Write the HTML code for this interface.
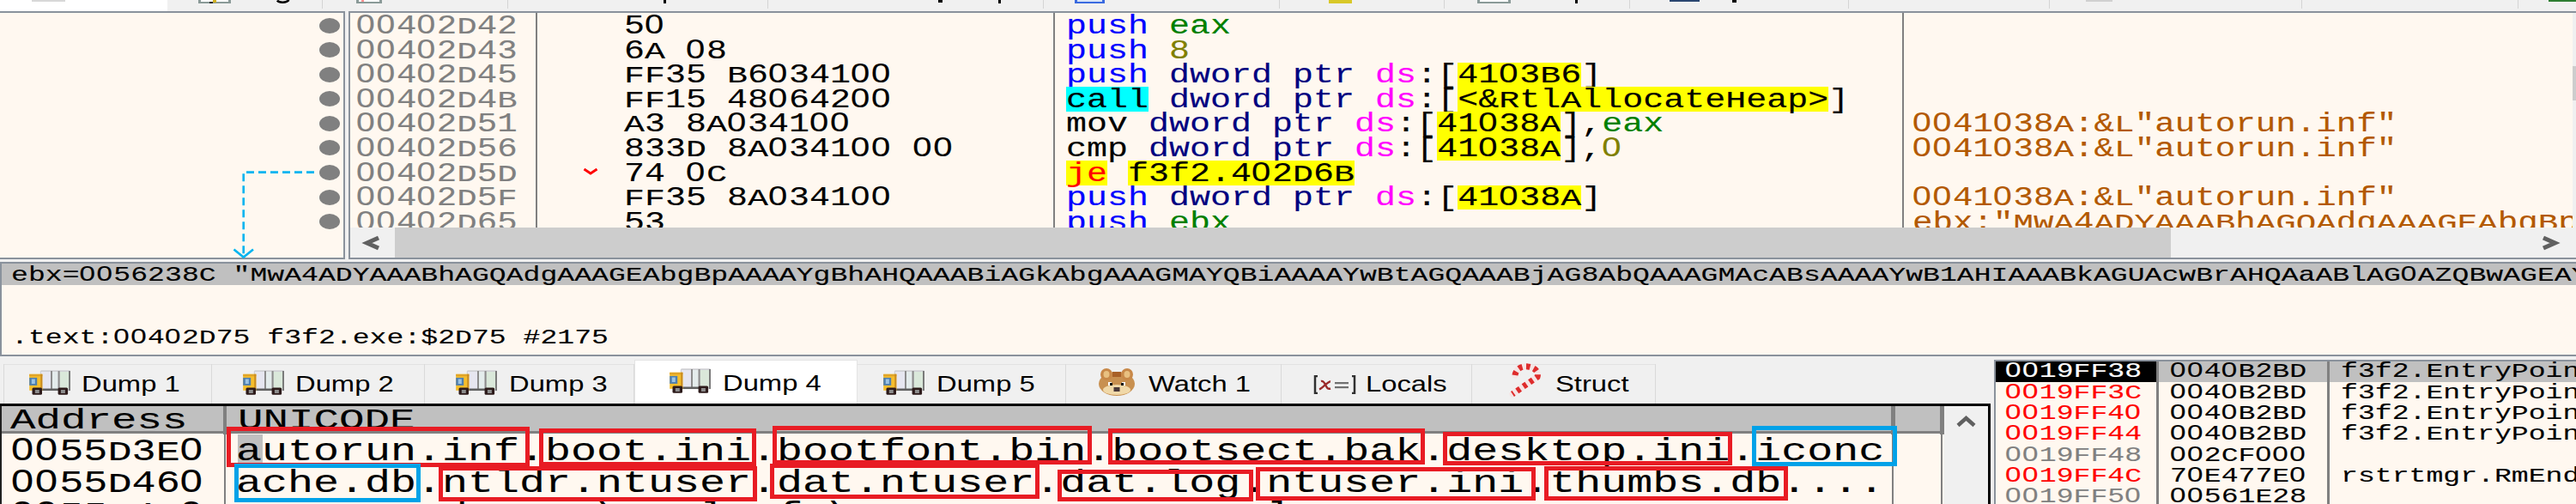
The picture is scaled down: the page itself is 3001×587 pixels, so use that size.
<!DOCTYPE html><html><head><meta charset="utf-8"><style>html,body{margin:0;padding:0;}body{width:3001px;height:587px;overflow:hidden;position:relative;background:#f0f0f0;}.t{position:absolute;white-space:pre;line-height:normal;transform-origin:0 0;-webkit-text-stroke:0.12px currentColor}.u{display:inline-block;transform:scaleY(.88);transform-origin:50% 0.8325em}.z{font-family:"Liberation Sans",sans-serif;letter-spacing:0.044em;line-height:0}</style></head><body><div style="position:absolute;left:0.0px;top:0.0px;width:3001.0px;height:13.0px;background:#f0f0f0;"></div>
<div style="position:absolute;left:0.0px;top:0.0px;width:195.0px;height:13.0px;background:#ffffff;"></div>
<div style="position:absolute;left:375.0px;top:0.0px;width:1.2px;height:10.0px;background:#d4d4d4;"></div>
<div style="position:absolute;left:591.0px;top:0.0px;width:1.2px;height:10.0px;background:#d4d4d4;"></div>
<div style="position:absolute;left:894.0px;top:0.0px;width:1.2px;height:10.0px;background:#d4d4d4;"></div>
<div style="position:absolute;left:1215.0px;top:0.0px;width:1.2px;height:10.0px;background:#d4d4d4;"></div>
<div style="position:absolute;left:1490.0px;top:0.0px;width:1.2px;height:10.0px;background:#d4d4d4;"></div>
<div style="position:absolute;left:1682.0px;top:0.0px;width:1.2px;height:10.0px;background:#d4d4d4;"></div>
<div style="position:absolute;left:1898.0px;top:0.0px;width:1.2px;height:10.0px;background:#d4d4d4;"></div>
<div style="position:absolute;left:2153.0px;top:0.0px;width:1.2px;height:10.0px;background:#d4d4d4;"></div>
<div style="position:absolute;left:2387.0px;top:0.0px;width:1.2px;height:10.0px;background:#d4d4d4;"></div>
<div style="position:absolute;left:2681.0px;top:0.0px;width:1.2px;height:10.0px;background:#d4d4d4;"></div>
<div style="position:absolute;left:2933.0px;top:0.0px;width:1.2px;height:10.0px;background:#d4d4d4;"></div>
<div style="position:absolute;left:37.0px;top:0.0px;width:39.0px;height:2.0px;background:#d8d8d8;"></div>
<div style="position:absolute;left:231.0px;top:0.0px;width:38.0px;height:4.0px;background:#8a9a98;"></div>
<div style="position:absolute;left:234.0px;top:0.0px;width:32.0px;height:1.5px;background:#ffffff;"></div>
<div style="position:absolute;left:248.0px;top:0.0px;width:4.0px;height:3.0px;background:#d0b020;"></div>
<div style="position:absolute;left:244.0px;top:2.0px;width:4.0px;height:2.0px;background:#202020;"></div>
<svg style="position:absolute;left:321px;top:0" width="18" height="5"><path d="M2 0.5 C4 3.5 13 3.5 15.5 0" fill="none" stroke="#000" stroke-width="2.6"/></svg>
<div style="position:absolute;left:415.0px;top:0.0px;width:30.0px;height:4.0px;background:#8a9a98;"></div>
<div style="position:absolute;left:418.0px;top:0.0px;width:24.0px;height:1.5px;background:#ffffff;"></div>
<div style="position:absolute;left:421.0px;top:0.0px;width:3.0px;height:2.0px;background:#ff9090;"></div>
<div style="position:absolute;left:773.0px;top:0.0px;width:3.0px;height:4.0px;background:#000;"></div>
<div style="position:absolute;left:1093.0px;top:0.0px;width:5.0px;height:3.0px;background:#000;"></div>
<div style="position:absolute;left:1163.0px;top:0.0px;width:3.0px;height:4.0px;background:#000;"></div>
<div style="position:absolute;left:1252.0px;top:0.0px;width:35.0px;height:4.0px;background:#3a6ae0;"></div>
<div style="position:absolute;left:1255.0px;top:0.0px;width:29.0px;height:2.0px;background:#d8e4f8;"></div>
<div style="position:absolute;left:1548.0px;top:0.0px;width:27.0px;height:4.0px;background:#d8c828;"></div>
<div style="position:absolute;left:1721.0px;top:0.0px;width:39.0px;height:4.0px;background:#8a9a98;"></div>
<div style="position:absolute;left:1724.0px;top:0.0px;width:33.0px;height:1.5px;background:#ffffff;"></div>
<div style="position:absolute;left:1835.0px;top:0.0px;width:3.0px;height:4.0px;background:#000;"></div>
<div style="position:absolute;left:1945.0px;top:0.0px;width:35.0px;height:2.0px;background:#2a4670;"></div>
<div style="position:absolute;left:2018.0px;top:0.0px;width:5.0px;height:3.0px;background:#000;"></div>
<div style="position:absolute;left:2430.0px;top:0.0px;width:31.0px;height:2.0px;background:#d0d0d0;"></div>
<div style="position:absolute;left:2969.0px;top:0.0px;width:32.0px;height:2.0px;background:#2e7d32;"></div>
<div style="position:absolute;left:0.0px;top:13.0px;width:402.0px;height:2.0px;background:#8a929c;"></div>
<div style="position:absolute;left:406.0px;top:13.0px;width:2595.0px;height:2.0px;background:#8a929c;"></div>
<div style="position:absolute;left:0.0px;top:15.0px;width:400.0px;height:285.0px;background:#fff8f0;"></div>
<div style="position:absolute;left:400.0px;top:13.0px;width:2.0px;height:289.0px;background:#8a929c;"></div>
<div style="position:absolute;left:0.0px;top:300.0px;width:402.0px;height:2.0px;background:#8a929c;"></div>
<div style="position:absolute;left:371.5px;top:20.6px;width:24px;height:18px;border-radius:50%;background:#808080"></div>
<div style="position:absolute;left:371.5px;top:49.2px;width:24px;height:18px;border-radius:50%;background:#808080"></div>
<div style="position:absolute;left:371.5px;top:77.7px;width:24px;height:18px;border-radius:50%;background:#808080"></div>
<div style="position:absolute;left:371.5px;top:106.3px;width:24px;height:18px;border-radius:50%;background:#808080"></div>
<div style="position:absolute;left:371.5px;top:134.9px;width:24px;height:18px;border-radius:50%;background:#808080"></div>
<div style="position:absolute;left:371.5px;top:163.4px;width:24px;height:18px;border-radius:50%;background:#808080"></div>
<div style="position:absolute;left:371.5px;top:192.0px;width:24px;height:18px;border-radius:50%;background:#808080"></div>
<div style="position:absolute;left:371.5px;top:220.6px;width:24px;height:18px;border-radius:50%;background:#808080"></div>
<div style="position:absolute;left:371.5px;top:249.1px;width:24px;height:18px;border-radius:50%;background:#808080"></div>
<svg style="position:absolute;left:0;top:0" width="402" height="302" viewBox="0 0 402 302"><path d="M366 200.6 H283.7 V299" fill="none" stroke="#00b4f0" stroke-width="2.6" stroke-dasharray="9 5"/><path d="M272.5 290.5 L283.7 299.5 L295 290.5" fill="none" stroke="#00b4f0" stroke-width="2.6"/></svg>
<div style="position:absolute;left:402.0px;top:13.0px;width:4.0px;height:289.0px;background:#f0f0f0;"></div>
<div style="position:absolute;left:406.0px;top:15.0px;width:2.0px;height:287.0px;background:#8a929c;"></div>
<div style="position:absolute;left:408.0px;top:15.0px;width:2593.0px;height:250.0px;background:#fff8f0;"></div>
<div style="position:absolute;left:406.0px;top:300.0px;width:2595.0px;height:2.0px;background:#8a929c;"></div>
<div style="position:absolute;left:624.0px;top:15.0px;width:2.4px;height:250.0px;background:#808080;"></div>
<div style="position:absolute;left:1227.0px;top:15.0px;width:2.4px;height:250.0px;background:#808080;"></div>
<div style="position:absolute;left:2216.0px;top:15.0px;width:2.4px;height:250.0px;background:#808080;"></div>
<div style="position:absolute;left:408px;top:15px;width:2589px;height:250px;overflow:hidden">
<div class="t" style="left:6.5px;top:-1.8px;font-family:'Liberation Mono',monospace;font-size:31.0px;transform:scaleX(1.2607526881720432);color:#808080;"><span class="z">0</span><span class="z">0</span>4<span class="z">0</span>2<span class="u">D</span>42</div>
<div class="t" style="left:319.0px;top:-1.8px;font-family:'Liberation Mono',monospace;font-size:31.0px;transform:scaleX(1.2903225806451615);color:#000;">5<span class="z">0</span></div>
<div class="t" style="left:834.3px;top:-1.8px;font-family:'Liberation Mono',monospace;font-size:31.0px;transform:scaleX(1.2903225806451615);color:#000;"><span style="color:#0000ff;">push</span> <span style="color:#008000;">eax</span></div>
<div class="t" style="left:6.5px;top:26.7px;font-family:'Liberation Mono',monospace;font-size:31.0px;transform:scaleX(1.2607526881720432);color:#808080;"><span class="z">0</span><span class="z">0</span>4<span class="z">0</span>2<span class="u">D</span>43</div>
<div class="t" style="left:319.0px;top:26.7px;font-family:'Liberation Mono',monospace;font-size:31.0px;transform:scaleX(1.2903225806451615);color:#000;">6<span class="u">A</span> <span class="z">0</span>8</div>
<div class="t" style="left:834.3px;top:26.7px;font-family:'Liberation Mono',monospace;font-size:31.0px;transform:scaleX(1.2903225806451615);color:#000;"><span style="color:#0000ff;">push</span> <span style="color:#808000;">8</span></div>
<div style="position:absolute;left:1290.3px;top:57.7px;width:144.0px;height:28.6px;background:#ffff00;"></div>
<div class="t" style="left:6.5px;top:55.3px;font-family:'Liberation Mono',monospace;font-size:31.0px;transform:scaleX(1.2607526881720432);color:#808080;"><span class="z">0</span><span class="z">0</span>4<span class="z">0</span>2<span class="u">D</span>45</div>
<div class="t" style="left:319.0px;top:55.3px;font-family:'Liberation Mono',monospace;font-size:31.0px;transform:scaleX(1.2903225806451615);color:#000;"><span class="u">F</span><span class="u">F</span>35 <span class="u">B</span>6<span class="z">0</span>341<span class="z">0</span><span class="z">0</span></div>
<div class="t" style="left:834.3px;top:55.3px;font-family:'Liberation Mono',monospace;font-size:31.0px;transform:scaleX(1.2903225806451615);color:#000;"><span style="color:#0000ff;">push</span> <span style="color:#000080;">dword ptr</span> <span style="color:#ff00ff;">ds</span>:[<span style="color:#000;">41<span class="z">0</span>3<span class="u">B</span>6</span>]</div>
<div style="position:absolute;left:834.3px;top:86.3px;width:96.0px;height:28.6px;background:#00ffff;"></div>
<div style="position:absolute;left:1290.3px;top:86.3px;width:432.0px;height:28.6px;background:#ffff00;"></div>
<div class="t" style="left:6.5px;top:83.9px;font-family:'Liberation Mono',monospace;font-size:31.0px;transform:scaleX(1.2607526881720432);color:#808080;"><span class="z">0</span><span class="z">0</span>4<span class="z">0</span>2<span class="u">D</span>4<span class="u">B</span></div>
<div class="t" style="left:319.0px;top:83.9px;font-family:'Liberation Mono',monospace;font-size:31.0px;transform:scaleX(1.2903225806451615);color:#000;"><span class="u">F</span><span class="u">F</span>15 48<span class="z">0</span>642<span class="z">0</span><span class="z">0</span></div>
<div class="t" style="left:834.3px;top:83.9px;font-family:'Liberation Mono',monospace;font-size:31.0px;transform:scaleX(1.2903225806451615);color:#000;"><span style="color:#000;">call</span> <span style="color:#000080;">dword ptr</span> <span style="color:#ff00ff;">ds</span>:[<span style="color:#000;">&lt;&amp;<span class="u">R</span>tl<span class="u">A</span>llocate<span class="u">H</span>eap&gt;</span>]</div>
<div style="position:absolute;left:1266.3px;top:114.9px;width:144.0px;height:28.6px;background:#ffff00;"></div>
<div class="t" style="left:6.5px;top:112.4px;font-family:'Liberation Mono',monospace;font-size:31.0px;transform:scaleX(1.2607526881720432);color:#808080;"><span class="z">0</span><span class="z">0</span>4<span class="z">0</span>2<span class="u">D</span>51</div>
<div class="t" style="left:319.0px;top:112.4px;font-family:'Liberation Mono',monospace;font-size:31.0px;transform:scaleX(1.2903225806451615);color:#000;"><span class="u">A</span>3 8<span class="u">A</span><span class="z">0</span>341<span class="z">0</span><span class="z">0</span></div>
<div class="t" style="left:834.3px;top:112.4px;font-family:'Liberation Mono',monospace;font-size:31.0px;transform:scaleX(1.2903225806451615);color:#000;">mov <span style="color:#000080;">dword ptr</span> <span style="color:#ff00ff;">ds</span>:[<span style="color:#000;">41<span class="z">0</span>38<span class="u">A</span></span>],<span style="color:#008000;">eax</span></div>
<div class="t" style="left:1819.5px;top:112.4px;font-family:'Liberation Mono',monospace;font-size:31.0px;transform:scaleX(1.263440860215054);color:#b35900;"><span class="z">0</span><span class="z">0</span>41<span class="z">0</span>38<span class="u">A</span>:&amp;<span class="u">L</span>"autorun.inf"</div>
<div style="position:absolute;left:1266.3px;top:143.4px;width:144.0px;height:28.6px;background:#ffff00;"></div>
<div class="t" style="left:6.5px;top:141.0px;font-family:'Liberation Mono',monospace;font-size:31.0px;transform:scaleX(1.2607526881720432);color:#808080;"><span class="z">0</span><span class="z">0</span>4<span class="z">0</span>2<span class="u">D</span>56</div>
<div class="t" style="left:319.0px;top:141.0px;font-family:'Liberation Mono',monospace;font-size:31.0px;transform:scaleX(1.2903225806451615);color:#000;">833<span class="u">D</span> 8<span class="u">A</span><span class="z">0</span>341<span class="z">0</span><span class="z">0</span> <span class="z">0</span><span class="z">0</span></div>
<div class="t" style="left:834.3px;top:141.0px;font-family:'Liberation Mono',monospace;font-size:31.0px;transform:scaleX(1.2903225806451615);color:#000;">cmp <span style="color:#000080;">dword ptr</span> <span style="color:#ff00ff;">ds</span>:[<span style="color:#000;">41<span class="z">0</span>38<span class="u">A</span></span>],<span style="color:#808000;"><span class="z">0</span></span></div>
<div class="t" style="left:1819.5px;top:141.0px;font-family:'Liberation Mono',monospace;font-size:31.0px;transform:scaleX(1.263440860215054);color:#b35900;"><span class="z">0</span><span class="z">0</span>41<span class="z">0</span>38<span class="u">A</span>:&amp;<span class="u">L</span>"autorun.inf"</div>
<div style="position:absolute;left:834.3px;top:172.0px;width:48.0px;height:28.6px;background:#ffff00;"></div>
<div style="position:absolute;left:906.3px;top:172.0px;width:264.0px;height:28.6px;background:#ffff00;"></div>
<div class="t" style="left:6.5px;top:169.6px;font-family:'Liberation Mono',monospace;font-size:31.0px;transform:scaleX(1.2607526881720432);color:#808080;"><span class="z">0</span><span class="z">0</span>4<span class="z">0</span>2<span class="u">D</span>5<span class="u">D</span></div>
<div class="t" style="left:319.0px;top:169.6px;font-family:'Liberation Mono',monospace;font-size:31.0px;transform:scaleX(1.2903225806451615);color:#000;">74 <span class="z">0</span><span class="u">C</span></div>
<div class="t" style="left:834.3px;top:169.6px;font-family:'Liberation Mono',monospace;font-size:31.0px;transform:scaleX(1.2903225806451615);color:#000;"><span style="color:#ff0000;">je</span> <span style="color:#000;">f3f2.4<span class="z">0</span>2<span class="u">D</span>6<span class="u">B</span></span></div>
<div style="position:absolute;left:1290.3px;top:200.6px;width:144.0px;height:28.6px;background:#ffff00;"></div>
<div class="t" style="left:6.5px;top:198.2px;font-family:'Liberation Mono',monospace;font-size:31.0px;transform:scaleX(1.2607526881720432);color:#808080;"><span class="z">0</span><span class="z">0</span>4<span class="z">0</span>2<span class="u">D</span>5<span class="u">F</span></div>
<div class="t" style="left:319.0px;top:198.2px;font-family:'Liberation Mono',monospace;font-size:31.0px;transform:scaleX(1.2903225806451615);color:#000;"><span class="u">F</span><span class="u">F</span>35 8<span class="u">A</span><span class="z">0</span>341<span class="z">0</span><span class="z">0</span></div>
<div class="t" style="left:834.3px;top:198.2px;font-family:'Liberation Mono',monospace;font-size:31.0px;transform:scaleX(1.2903225806451615);color:#000;"><span style="color:#0000ff;">push</span> <span style="color:#000080;">dword ptr</span> <span style="color:#ff00ff;">ds</span>:[<span style="color:#000;">41<span class="z">0</span>38<span class="u">A</span></span>]</div>
<div class="t" style="left:1819.5px;top:198.2px;font-family:'Liberation Mono',monospace;font-size:31.0px;transform:scaleX(1.263440860215054);color:#b35900;"><span class="z">0</span><span class="z">0</span>41<span class="z">0</span>38<span class="u">A</span>:&amp;<span class="u">L</span>"autorun.inf"</div>
<div class="t" style="left:6.5px;top:226.7px;font-family:'Liberation Mono',monospace;font-size:31.0px;transform:scaleX(1.2607526881720432);color:#808080;"><span class="z">0</span><span class="z">0</span>4<span class="z">0</span>2<span class="u">D</span>65</div>
<div class="t" style="left:319.0px;top:226.7px;font-family:'Liberation Mono',monospace;font-size:31.0px;transform:scaleX(1.2903225806451615);color:#000;">53</div>
<div class="t" style="left:834.3px;top:226.7px;font-family:'Liberation Mono',monospace;font-size:31.0px;transform:scaleX(1.2903225806451615);color:#000;"><span style="color:#0000ff;">push</span> <span style="color:#008000;">ebx</span></div>
<div class="t" style="left:1819.5px;top:226.7px;font-family:'Liberation Mono',monospace;font-size:31.0px;transform:scaleX(1.263440860215054);color:#b35900;">ebx:"<span class="u">M</span>w<span class="u">A</span>4<span class="u">A</span><span class="u">D</span><span class="u">Y</span><span class="u">A</span><span class="u">A</span><span class="u">A</span><span class="u">B</span>h<span class="u">A</span><span class="u">G</span><span class="u">Q</span><span class="u">A</span>dg<span class="u">A</span><span class="u">A</span><span class="u">A</span><span class="u">G</span><span class="u">E</span><span class="u">A</span>bg<span class="u">B</span>p<span class="u">A</span><span class="u">A</span><span class="u">A</span><span class="u">A</span></div>
</div>
<svg style="position:absolute;left:0;top:0" width="800" height="300"><path d="M680.5 197 L688 202 L695.5 197" fill="none" stroke="#ff0000" stroke-width="2.8"/></svg>
<div style="position:absolute;left:408.0px;top:265.0px;width:2589.0px;height:35.0px;background:#f0f0f0;"></div>
<div style="position:absolute;left:460.0px;top:265.0px;width:2069.0px;height:35.0px;background:#cdcdcd;"></div>
<svg style="position:absolute;left:0;top:0" width="3001" height="302"><path d="M441 277 L427.5 283 L441 289" fill="none" stroke="#606060" stroke-width="5"/><path d="M2963 277 L2976.5 283 L2963 289" fill="none" stroke="#606060" stroke-width="5"/></svg>
<div style="position:absolute;left:2997.0px;top:15.0px;width:4.0px;height:285.0px;background:#f0f0f0;"></div>
<div style="position:absolute;left:2997.0px;top:77.0px;width:4.0px;height:40.0px;background:#cdcdcd;"></div>
<div style="position:absolute;left:0.0px;top:302.0px;width:3001.0px;height:3.0px;background:#f0f0f0;"></div>
<div style="position:absolute;left:0.0px;top:305.0px;width:3001.0px;height:2.0px;background:#8a929c;"></div>
<div style="position:absolute;left:0.0px;top:307.0px;width:3001.0px;height:106.0px;background:#fff8f0;"></div>
<div style="position:absolute;left:0.0px;top:305.0px;width:1.5px;height:110.0px;background:#8a929c;"></div>
<div style="position:absolute;left:0.0px;top:413.0px;width:3001.0px;height:2.0px;background:#8a929c;"></div>
<div style="position:absolute;left:1.5px;top:307.0px;width:2999.5px;height:25.0px;background:#c0c0c0;"></div>
<div class="t" style="left:12.5px;top:306.9px;font-family:'Liberation Mono',monospace;font-size:24.5px;transform:scaleX(1.3523809523809525);color:#000;">ebx=<span class="z">0</span><span class="z">0</span>56238<span class="u">C</span> "<span class="u">M</span>w<span class="u">A</span>4<span class="u">A</span><span class="u">D</span><span class="u">Y</span><span class="u">A</span><span class="u">A</span><span class="u">A</span><span class="u">B</span>h<span class="u">A</span><span class="u">G</span><span class="u">Q</span><span class="u">A</span>dg<span class="u">A</span><span class="u">A</span><span class="u">A</span><span class="u">G</span><span class="u">E</span><span class="u">A</span>bg<span class="u">B</span>p<span class="u">A</span><span class="u">A</span><span class="u">A</span><span class="u">A</span><span class="u">Y</span>g<span class="u">B</span>h<span class="u">A</span><span class="u">H</span><span class="u">Q</span><span class="u">A</span><span class="u">A</span><span class="u">A</span><span class="u">B</span>i<span class="u">A</span><span class="u">G</span>k<span class="u">A</span>bg<span class="u">A</span><span class="u">A</span><span class="u">A</span><span class="u">G</span><span class="u">M</span><span class="u">A</span><span class="u">Y</span><span class="u">Q</span><span class="u">B</span>i<span class="u">A</span><span class="u">A</span><span class="u">A</span><span class="u">A</span><span class="u">Y</span>w<span class="u">B</span>t<span class="u">A</span><span class="u">G</span><span class="u">Q</span><span class="u">A</span><span class="u">A</span><span class="u">A</span><span class="u">B</span>j<span class="u">A</span><span class="u">G</span>8<span class="u">A</span>b<span class="u">Q</span><span class="u">A</span><span class="u">A</span><span class="u">A</span><span class="u">G</span><span class="u">M</span><span class="u">A</span>c<span class="u">A</span><span class="u">B</span>s<span class="u">A</span><span class="u">A</span><span class="u">A</span><span class="u">A</span><span class="u">Y</span>w<span class="u">B</span>1<span class="u">A</span><span class="u">H</span><span class="u">I</span><span class="u">A</span><span class="u">A</span><span class="u">A</span><span class="u">B</span>k<span class="u">A</span><span class="u">G</span><span class="u">U</span><span class="u">A</span>cw<span class="u">B</span>r<span class="u">A</span><span class="u">H</span><span class="u">Q</span><span class="u">A</span>a<span class="u">A</span><span class="u">B</span>l<span class="u">A</span><span class="u">G</span><span class="z">0</span><span class="u">A</span><span class="u">Z</span><span class="u">Q</span><span class="u">B</span>w<span class="u">A</span><span class="u">G</span><span class="u">E</span><span class="u">A</span><span class="u">Y</span>w<span class="u">B</span>l</div>
<div class="t" style="left:12.5px;top:380.2px;font-family:'Liberation Mono',monospace;font-size:24.5px;transform:scaleX(1.3523809523809525);color:#000;">.text:<span class="z">0</span><span class="z">0</span>4<span class="z">0</span>2<span class="u">D</span>75 f3f2.exe:$2<span class="u">D</span>75 #2175</div>
<div style="position:absolute;left:0.0px;top:415.0px;width:2322.0px;height:55.0px;background:#f0f0f0;"></div>
<div style="position:absolute;left:2322.0px;top:415.0px;width:679.0px;height:3.5px;background:#f0f0f0;"></div>
<div style="position:absolute;left:4.4px;top:423.5px;width:242.2px;height:1.0px;background:#e2e2e2;"></div>
<div style="position:absolute;left:245.6px;top:423.5px;width:1.0px;height:46.5px;background:#dadada;"></div>
<div style="position:absolute;left:33.7px;top:431px"><svg width="48" height="29" viewBox="0 0 48 29"><rect x="12.8" y="0.3" width="35.4" height="24" rx="1.5" fill="#cfd0d4"/><rect x="14" y="2" width="11" height="20" fill="#e6e6f0"/><rect x="27" y="2" width="6.6" height="20" fill="#e4ecec"/><rect x="35.6" y="2" width="10.4" height="20" fill="#dae8da"/><rect x="25" y="1" width="2" height="22" fill="#8c8c8c"/><rect x="33.6" y="1" width="2" height="22" fill="#8c8c8c"/><rect x="46" y="1" width="2.2" height="23" fill="#7a7a7a"/><rect x="15" y="21.5" width="19" height="2.5" fill="#606060"/><rect x="0.2" y="4.8" width="15.1" height="19" fill="#f6be2c"/><rect x="0.2" y="4.8" width="15.1" height="2.5" fill="#e0a428"/><rect x="13.3" y="4.8" width="2" height="19" fill="#c88a20"/><rect x="0.2" y="8.9" width="9" height="9" fill="#4f7fae"/><rect x="2.8" y="10.5" width="4" height="5.5" fill="#9cc4e4"/><rect x="3.5" y="20.6" width="11.5" height="8.2" rx="1.5" fill="#2c1a1a"/><rect x="6.8" y="23" width="5" height="4" fill="#8c8c8c"/><rect x="33.6" y="20.6" width="11.5" height="8.2" rx="1.5" fill="#2c1a1a"/><rect x="36.9" y="23" width="5" height="4" fill="#8c8c8c"/></svg></div>
<div class="t" style="left:95.0px;top:433.3px;font-family:'Liberation Sans',sans-serif;font-size:25.0px;transform:scaleX(1.31);color:#000;-webkit-text-stroke:0">Dump 1</div>
<div style="position:absolute;left:246.6px;top:423.5px;width:248.4px;height:1.0px;background:#e2e2e2;"></div>
<div style="position:absolute;left:494.0px;top:423.5px;width:1.0px;height:46.5px;background:#dadada;"></div>
<div style="position:absolute;left:282.5px;top:431px"><svg width="48" height="29" viewBox="0 0 48 29"><rect x="12.8" y="0.3" width="35.4" height="24" rx="1.5" fill="#cfd0d4"/><rect x="14" y="2" width="11" height="20" fill="#e6e6f0"/><rect x="27" y="2" width="6.6" height="20" fill="#e4ecec"/><rect x="35.6" y="2" width="10.4" height="20" fill="#dae8da"/><rect x="25" y="1" width="2" height="22" fill="#8c8c8c"/><rect x="33.6" y="1" width="2" height="22" fill="#8c8c8c"/><rect x="46" y="1" width="2.2" height="23" fill="#7a7a7a"/><rect x="15" y="21.5" width="19" height="2.5" fill="#606060"/><rect x="0.2" y="4.8" width="15.1" height="19" fill="#f6be2c"/><rect x="0.2" y="4.8" width="15.1" height="2.5" fill="#e0a428"/><rect x="13.3" y="4.8" width="2" height="19" fill="#c88a20"/><rect x="0.2" y="8.9" width="9" height="9" fill="#4f7fae"/><rect x="2.8" y="10.5" width="4" height="5.5" fill="#9cc4e4"/><rect x="3.5" y="20.6" width="11.5" height="8.2" rx="1.5" fill="#2c1a1a"/><rect x="6.8" y="23" width="5" height="4" fill="#8c8c8c"/><rect x="33.6" y="20.6" width="11.5" height="8.2" rx="1.5" fill="#2c1a1a"/><rect x="36.9" y="23" width="5" height="4" fill="#8c8c8c"/></svg></div>
<div class="t" style="left:344.0px;top:433.3px;font-family:'Liberation Sans',sans-serif;font-size:25.0px;transform:scaleX(1.31);color:#000;-webkit-text-stroke:0">Dump 2</div>
<div style="position:absolute;left:495.0px;top:423.5px;width:244.0px;height:1.0px;background:#e2e2e2;"></div>
<div style="position:absolute;left:738.0px;top:423.5px;width:1.0px;height:46.5px;background:#dadada;"></div>
<div style="position:absolute;left:531px;top:431px"><svg width="48" height="29" viewBox="0 0 48 29"><rect x="12.8" y="0.3" width="35.4" height="24" rx="1.5" fill="#cfd0d4"/><rect x="14" y="2" width="11" height="20" fill="#e6e6f0"/><rect x="27" y="2" width="6.6" height="20" fill="#e4ecec"/><rect x="35.6" y="2" width="10.4" height="20" fill="#dae8da"/><rect x="25" y="1" width="2" height="22" fill="#8c8c8c"/><rect x="33.6" y="1" width="2" height="22" fill="#8c8c8c"/><rect x="46" y="1" width="2.2" height="23" fill="#7a7a7a"/><rect x="15" y="21.5" width="19" height="2.5" fill="#606060"/><rect x="0.2" y="4.8" width="15.1" height="19" fill="#f6be2c"/><rect x="0.2" y="4.8" width="15.1" height="2.5" fill="#e0a428"/><rect x="13.3" y="4.8" width="2" height="19" fill="#c88a20"/><rect x="0.2" y="8.9" width="9" height="9" fill="#4f7fae"/><rect x="2.8" y="10.5" width="4" height="5.5" fill="#9cc4e4"/><rect x="3.5" y="20.6" width="11.5" height="8.2" rx="1.5" fill="#2c1a1a"/><rect x="6.8" y="23" width="5" height="4" fill="#8c8c8c"/><rect x="33.6" y="20.6" width="11.5" height="8.2" rx="1.5" fill="#2c1a1a"/><rect x="36.9" y="23" width="5" height="4" fill="#8c8c8c"/></svg></div>
<div class="t" style="left:593.1px;top:433.3px;font-family:'Liberation Sans',sans-serif;font-size:25.0px;transform:scaleX(1.31);color:#000;-webkit-text-stroke:0">Dump 3</div>
<div style="position:absolute;left:739.0px;top:419.0px;width:260.0px;height:51.0px;background:#ffffff;"></div>
<div style="position:absolute;left:739.0px;top:419.0px;width:1.0px;height:51.0px;background:#e4e4e4;"></div>
<div style="position:absolute;left:998.0px;top:419.0px;width:1.0px;height:51.0px;background:#e4e4e4;"></div>
<div style="position:absolute;left:739.0px;top:419.0px;width:260.0px;height:1.0px;background:#e4e4e4;"></div>
<div style="position:absolute;left:779.7px;top:429px"><svg width="48" height="29" viewBox="0 0 48 29"><rect x="12.8" y="0.3" width="35.4" height="24" rx="1.5" fill="#cfd0d4"/><rect x="14" y="2" width="11" height="20" fill="#e6e6f0"/><rect x="27" y="2" width="6.6" height="20" fill="#e4ecec"/><rect x="35.6" y="2" width="10.4" height="20" fill="#dae8da"/><rect x="25" y="1" width="2" height="22" fill="#8c8c8c"/><rect x="33.6" y="1" width="2" height="22" fill="#8c8c8c"/><rect x="46" y="1" width="2.2" height="23" fill="#7a7a7a"/><rect x="15" y="21.5" width="19" height="2.5" fill="#606060"/><rect x="0.2" y="4.8" width="15.1" height="19" fill="#f6be2c"/><rect x="0.2" y="4.8" width="15.1" height="2.5" fill="#e0a428"/><rect x="13.3" y="4.8" width="2" height="19" fill="#c88a20"/><rect x="0.2" y="8.9" width="9" height="9" fill="#4f7fae"/><rect x="2.8" y="10.5" width="4" height="5.5" fill="#9cc4e4"/><rect x="3.5" y="20.6" width="11.5" height="8.2" rx="1.5" fill="#2c1a1a"/><rect x="6.8" y="23" width="5" height="4" fill="#8c8c8c"/><rect x="33.6" y="20.6" width="11.5" height="8.2" rx="1.5" fill="#2c1a1a"/><rect x="36.9" y="23" width="5" height="4" fill="#8c8c8c"/></svg></div>
<div class="t" style="left:841.5px;top:431.7px;font-family:'Liberation Sans',sans-serif;font-size:25.0px;transform:scaleX(1.31);color:#000;-webkit-text-stroke:0">Dump 4</div>
<div style="position:absolute;left:999.0px;top:423.5px;width:242.5px;height:1.0px;background:#e2e2e2;"></div>
<div style="position:absolute;left:1240.5px;top:423.5px;width:1.0px;height:46.5px;background:#dadada;"></div>
<div style="position:absolute;left:1029px;top:431px"><svg width="48" height="29" viewBox="0 0 48 29"><rect x="12.8" y="0.3" width="35.4" height="24" rx="1.5" fill="#cfd0d4"/><rect x="14" y="2" width="11" height="20" fill="#e6e6f0"/><rect x="27" y="2" width="6.6" height="20" fill="#e4ecec"/><rect x="35.6" y="2" width="10.4" height="20" fill="#dae8da"/><rect x="25" y="1" width="2" height="22" fill="#8c8c8c"/><rect x="33.6" y="1" width="2" height="22" fill="#8c8c8c"/><rect x="46" y="1" width="2.2" height="23" fill="#7a7a7a"/><rect x="15" y="21.5" width="19" height="2.5" fill="#606060"/><rect x="0.2" y="4.8" width="15.1" height="19" fill="#f6be2c"/><rect x="0.2" y="4.8" width="15.1" height="2.5" fill="#e0a428"/><rect x="13.3" y="4.8" width="2" height="19" fill="#c88a20"/><rect x="0.2" y="8.9" width="9" height="9" fill="#4f7fae"/><rect x="2.8" y="10.5" width="4" height="5.5" fill="#9cc4e4"/><rect x="3.5" y="20.6" width="11.5" height="8.2" rx="1.5" fill="#2c1a1a"/><rect x="6.8" y="23" width="5" height="4" fill="#8c8c8c"/><rect x="33.6" y="20.6" width="11.5" height="8.2" rx="1.5" fill="#2c1a1a"/><rect x="36.9" y="23" width="5" height="4" fill="#8c8c8c"/></svg></div>
<div class="t" style="left:1090.6px;top:433.3px;font-family:'Liberation Sans',sans-serif;font-size:25.0px;transform:scaleX(1.31);color:#000;-webkit-text-stroke:0">Dump 5</div>
<div style="position:absolute;left:1241.5px;top:423.5px;width:251.9px;height:1.0px;background:#e2e2e2;"></div>
<div style="position:absolute;left:1492.4px;top:423.5px;width:1.0px;height:46.5px;background:#dadada;"></div>
<div style="position:absolute;left:1278px;top:427.5px"><svg width="46" height="34" viewBox="0 0 46 34"><ellipse cx="23" cy="19" rx="21" ry="14" fill="#c89050"/><ellipse cx="11" cy="8" rx="7" ry="7" fill="#c88848"/><ellipse cx="35" cy="8" rx="7" ry="7" fill="#c88848"/><ellipse cx="11" cy="8" rx="3.5" ry="4" fill="#e8c080"/><ellipse cx="35" cy="8" rx="3.5" ry="4" fill="#e8c080"/><rect x="18" y="5" width="10" height="6" fill="#a86028"/><ellipse cx="23" cy="26" rx="16" ry="6" fill="#f0d8a8"/><rect x="13" y="17" width="4" height="4" fill="#fff"/><rect x="15" y="18" width="3" height="3" fill="#111"/><rect x="29" y="17" width="4" height="4" fill="#fff"/><rect x="28" y="18" width="3" height="3" fill="#111"/><rect x="19.5" y="23" width="7" height="5" fill="#4a3838"/></svg></div>
<div class="t" style="left:1337.5px;top:433.3px;font-family:'Liberation Sans',sans-serif;font-size:25.0px;transform:scaleX(1.31);color:#000;-webkit-text-stroke:0">Watch 1</div>
<div style="position:absolute;left:1493.4px;top:423.5px;width:222.0px;height:1.0px;background:#e2e2e2;"></div>
<div style="position:absolute;left:1714.4px;top:423.5px;width:1.0px;height:46.5px;background:#dadada;"></div>
<div style="position:absolute;left:1529.7px;top:436.5px"><svg width="50" height="22" viewBox="0 0 50 22"><path d="M5 1 H2 V21 H5" fill="none" stroke="#303030" stroke-width="2.5"/><path d="M45 1 H48 V21 H45" fill="none" stroke="#303030" stroke-width="2.5"/><path d="M9 7 C12 6 13 9 14.5 12 C16 15 17 16.5 20 15.5 M20 7.5 C17 7 11 15 7 16.5" fill="none" stroke="#9a2a2a" stroke-width="2.4"/><rect x="25" y="8" width="16" height="2.2" fill="#707070"/><rect x="25" y="13" width="16" height="2.2" fill="#707070"/></svg></div>
<div class="t" style="left:1590.6px;top:433.3px;font-family:'Liberation Sans',sans-serif;font-size:25.0px;transform:scaleX(1.31);color:#000;-webkit-text-stroke:0">Locals</div>
<div style="position:absolute;left:1715.4px;top:423.5px;width:213.4px;height:1.0px;background:#e2e2e2;"></div>
<div style="position:absolute;left:1927.8px;top:423.5px;width:1.0px;height:46.5px;background:#dadada;"></div>
<div style="position:absolute;left:1745px;top:420px"><svg width="50" height="45" viewBox="0 0 50 45"><path d="M20 17 C21 9 29 6 35 7 C43 8 48 13 46 19 L17 39" fill="none" stroke="#f6e4e4" stroke-width="7" stroke-linecap="round"/><path d="M20 17 C21 9 29 6 35 7 C43 8 48 13 46 19 L17 39" fill="none" stroke="#de2c2c" stroke-width="7" stroke-dasharray="4.5 4.5"/></svg></div>
<div class="t" style="left:1811.8px;top:433.3px;font-family:'Liberation Sans',sans-serif;font-size:25.0px;transform:scaleX(1.31);color:#000;-webkit-text-stroke:0">Struct</div>
<div style="position:absolute;left:4.4px;top:423.5px;width:1.0px;height:46.5px;background:#dadada;"></div>
<div style="position:absolute;left:0.0px;top:470.0px;width:2319.0px;height:3.0px;background:#000000;"></div>
<div style="position:absolute;left:0.0px;top:473.0px;width:2316.0px;height:114.0px;background:#fff8f0;"></div>
<div style="position:absolute;left:0.0px;top:473.0px;width:1.5px;height:114.0px;background:#202020;"></div>
<div style="position:absolute;left:1.5px;top:473.0px;width:2262.5px;height:29.3px;background:#c0c0c0;"></div>
<div style="position:absolute;left:1.5px;top:502.3px;width:2262.5px;height:3.2px;background:#808080;"></div>
<div style="position:absolute;left:259.5px;top:473.0px;width:4.8px;height:32.5px;background:#808080;"></div>
<div style="position:absolute;left:2203.0px;top:473.0px;width:5.0px;height:32.5px;background:#808080;"></div>
<div style="position:absolute;left:2259.5px;top:473.0px;width:5.0px;height:32.5px;background:#808080;"></div>
<div style="position:absolute;left:261.0px;top:505.5px;width:2.2px;height:81.5px;background:#808080;"></div>
<div style="position:absolute;left:2204.0px;top:505.5px;width:2.4px;height:81.5px;background:#808080;"></div>
<div style="position:absolute;left:2261.0px;top:505.5px;width:2.4px;height:81.5px;background:#808080;"></div>
<div style="position:absolute;left:2264.5px;top:473.0px;width:51.5px;height:114.0px;background:#f0f0f0;"></div>
<svg style="position:absolute;left:2264px;top:473px" width="52" height="40"><path d="M17 22.5 L26.5 14 L36 22.5" fill="none" stroke="#606060" stroke-width="4.5"/></svg>
<div style="position:absolute;left:2316.0px;top:470.0px;width:3.0px;height:117.0px;background:#000000;"></div>
<div style="position:absolute;left:0;top:473px;width:2264px;height:29.3px;overflow:hidden">
<div class="t" style="left:12.0px;top:-1.8px;font-family:'Liberation Mono',monospace;font-size:34.0px;transform:scaleX(1.4460784313725492);color:#000;">Address</div>
<div class="t" style="left:276.5px;top:-1.8px;font-family:'Liberation Mono',monospace;font-size:34.0px;transform:scaleX(1.4460784313725492);color:#000;">UNICODE</div>
</div>
<div style="position:absolute;left:277.0px;top:505.5px;width:29.0px;height:33.9px;background:#c0c0c0;"></div>
<div style="position:absolute;left:0;top:505.5px;width:2316px;height:81.5px;overflow:hidden">
<div class="t" style="left:13.0px;top:0.1px;font-family:'Liberation Mono',monospace;font-size:36.5px;transform:scaleX(1.2831050228310503);color:#000;"><span class="z">0</span><span class="z">0</span>55<span class="u">D</span>3<span class="u">E</span><span class="z">0</span></div>
<div class="t" style="left:274.5px;top:0.1px;font-family:'Liberation Mono',monospace;font-size:36.5px;transform:scaleX(1.3698630136986303);color:#000;">autorun.inf.boot.ini.bootfont.bin.bootsect.bak.desktop.ini.iconc</div>
<div class="t" style="left:13.0px;top:37.3px;font-family:'Liberation Mono',monospace;font-size:36.5px;transform:scaleX(1.2831050228310503);color:#000;"><span class="z">0</span><span class="z">0</span>55<span class="u">D</span>46<span class="z">0</span></div>
<div class="t" style="left:274.5px;top:37.3px;font-family:'Liberation Mono',monospace;font-size:36.5px;transform:scaleX(1.3698630136986303);color:#000;">ache.db.ntldr.ntuser.dat.ntuser.dat.log.ntuser.ini.thumbs.db....</div>
<div class="t" style="left:13.0px;top:74.5px;font-family:'Liberation Mono',monospace;font-size:36.5px;transform:scaleX(1.2831050228310503);color:#000;"><span class="z">0</span><span class="z">0</span>55<span class="u">D</span>4<span class="u">E</span><span class="z">0</span></div>
<div class="t" style="left:274.5px;top:74.5px;font-family:'Liberation Mono',monospace;font-size:36.5px;transform:scaleX(1.3698630136986303);color:#000;">u.o.e.s.d.w.o.\.u.l.efs\r.w.o.s.u.o.e.s.l.w.o.s.u.o.e.s.r.w.o.s.</div>
</div>
<div style="position:absolute;left:264.1px;top:496.8px;width:342.7px;height:37.1px;border:5px solid #e81c24"></div>
<div style="position:absolute;left:627.7px;top:498.5px;width:243.3px;height:34.5px;border:5px solid #e81c24"></div>
<div style="position:absolute;left:900.1px;top:496.2px;width:361.7px;height:34.7px;border:5px solid #e81c24"></div>
<div style="position:absolute;left:1291.4px;top:498.5px;width:358.4px;height:32.4px;border:5px solid #e81c24"></div>
<div style="position:absolute;left:1681.4px;top:502.9px;width:326.4px;height:29.0px;border:5px solid #e81c24"></div>
<div style="position:absolute;left:2041.0px;top:496.3px;width:159.0px;height:36.9px;border:5px solid #00a2e8"></div>
<div style="position:absolute;left:273.1px;top:540.3px;width:207.4px;height:34.3px;border:5px solid #00a2e8"></div>
<div style="position:absolute;left:511.4px;top:542.5px;width:360.6px;height:31.8px;border:5px solid #e81c24"></div>
<div style="position:absolute;left:897.3px;top:539.7px;width:303.3px;height:31.3px;border:5px solid #e81c24"></div>
<div style="position:absolute;left:1231.5px;top:547.4px;width:218.5px;height:26.6px;border:5px solid #e81c24"></div>
<div style="position:absolute;left:1463.1px;top:544.4px;width:315.9px;height:28.5px;border:5px solid #e81c24"></div>
<div style="position:absolute;left:1798.7px;top:542.6px;width:274.4px;height:30.3px;border:5px solid #e81c24"></div>
<div style="position:absolute;left:2319.0px;top:415.0px;width:3.5px;height:172.0px;background:#f0f0f0;"></div>
<div style="position:absolute;left:2322.5px;top:418.7px;width:678.5px;height:1.9px;background:#8a929c;"></div>
<div style="position:absolute;left:2322.5px;top:418.7px;width:2.0px;height:168.3px;background:#8a929c;"></div>
<div style="position:absolute;left:2324.5px;top:420.6px;width:676.5px;height:166.4px;background:#fff8f0;"></div>
<div style="position:absolute;left:2324.6px;top:420.6px;width:187.4px;height:24.3px;background:#000000;"></div>
<div style="position:absolute;left:2515.0px;top:420.6px;width:486.0px;height:24.3px;background:#c0c0c0;"></div>
<div style="position:absolute;left:2512.0px;top:420.6px;width:3.0px;height:166.4px;background:#808080;"></div>
<div style="position:absolute;left:2711.0px;top:420.6px;width:3.0px;height:166.4px;background:#808080;"></div>
<div class="t" style="left:2335.5px;top:419.4px;font-family:'Liberation Mono',monospace;font-size:24.5px;transform:scaleX(1.3523809523809525);color:#ffffff;"><span class="z">0</span><span class="z">0</span>19<span class="u">F</span><span class="u">F</span>38</div>
<div class="t" style="left:2527.5px;top:419.4px;font-family:'Liberation Mono',monospace;font-size:24.5px;transform:scaleX(1.3523809523809525);color:#000;"><span class="z">0</span><span class="z">0</span>4<span class="z">0</span><span class="u">B</span>2<span class="u">B</span><span class="u">D</span></div>
<div class="t" style="left:2726.5px;top:419.4px;font-family:'Liberation Mono',monospace;font-size:24.5px;transform:scaleX(1.3523809523809525);color:#000;">f3f2.<span class="u">E</span>ntry<span class="u">P</span>oint</div>
<div class="t" style="left:2335.5px;top:443.7px;font-family:'Liberation Mono',monospace;font-size:24.5px;transform:scaleX(1.3523809523809525);color:#ff0000;"><span class="z">0</span><span class="z">0</span>19<span class="u">F</span><span class="u">F</span>3<span class="u">C</span></div>
<div class="t" style="left:2527.5px;top:443.7px;font-family:'Liberation Mono',monospace;font-size:24.5px;transform:scaleX(1.3523809523809525);color:#000;"><span class="z">0</span><span class="z">0</span>4<span class="z">0</span><span class="u">B</span>2<span class="u">B</span><span class="u">D</span></div>
<div class="t" style="left:2726.5px;top:443.7px;font-family:'Liberation Mono',monospace;font-size:24.5px;transform:scaleX(1.3523809523809525);color:#000;">f3f2.<span class="u">E</span>ntry<span class="u">P</span>oint</div>
<div class="t" style="left:2335.5px;top:468.0px;font-family:'Liberation Mono',monospace;font-size:24.5px;transform:scaleX(1.3523809523809525);color:#ff0000;"><span class="z">0</span><span class="z">0</span>19<span class="u">F</span><span class="u">F</span>4<span class="z">0</span></div>
<div class="t" style="left:2527.5px;top:468.0px;font-family:'Liberation Mono',monospace;font-size:24.5px;transform:scaleX(1.3523809523809525);color:#000;"><span class="z">0</span><span class="z">0</span>4<span class="z">0</span><span class="u">B</span>2<span class="u">B</span><span class="u">D</span></div>
<div class="t" style="left:2726.5px;top:468.0px;font-family:'Liberation Mono',monospace;font-size:24.5px;transform:scaleX(1.3523809523809525);color:#000;">f3f2.<span class="u">E</span>ntry<span class="u">P</span>oint</div>
<div class="t" style="left:2335.5px;top:492.3px;font-family:'Liberation Mono',monospace;font-size:24.5px;transform:scaleX(1.3523809523809525);color:#ff0000;"><span class="z">0</span><span class="z">0</span>19<span class="u">F</span><span class="u">F</span>44</div>
<div class="t" style="left:2527.5px;top:492.3px;font-family:'Liberation Mono',monospace;font-size:24.5px;transform:scaleX(1.3523809523809525);color:#000;"><span class="z">0</span><span class="z">0</span>4<span class="z">0</span><span class="u">B</span>2<span class="u">B</span><span class="u">D</span></div>
<div class="t" style="left:2726.5px;top:492.3px;font-family:'Liberation Mono',monospace;font-size:24.5px;transform:scaleX(1.3523809523809525);color:#000;">f3f2.<span class="u">E</span>ntry<span class="u">P</span>oint</div>
<div class="t" style="left:2335.5px;top:516.6px;font-family:'Liberation Mono',monospace;font-size:24.5px;transform:scaleX(1.3523809523809525);color:#808080;"><span class="z">0</span><span class="z">0</span>19<span class="u">F</span><span class="u">F</span>48</div>
<div class="t" style="left:2527.5px;top:516.6px;font-family:'Liberation Mono',monospace;font-size:24.5px;transform:scaleX(1.3523809523809525);color:#000;"><span class="z">0</span><span class="z">0</span>2<span class="u">C</span><span class="u">F</span><span class="z">0</span><span class="z">0</span><span class="z">0</span></div>
<div class="t" style="left:2335.5px;top:540.9px;font-family:'Liberation Mono',monospace;font-size:24.5px;transform:scaleX(1.3523809523809525);color:#ff0000;"><span class="z">0</span><span class="z">0</span>19<span class="u">F</span><span class="u">F</span>4<span class="u">C</span></div>
<div class="t" style="left:2527.5px;top:540.9px;font-family:'Liberation Mono',monospace;font-size:24.5px;transform:scaleX(1.3523809523809525);color:#000;">7<span class="z">0</span><span class="u">E</span>477<span class="u">E</span><span class="z">0</span></div>
<div class="t" style="left:2726.5px;top:540.9px;font-family:'Liberation Mono',monospace;font-size:24.5px;transform:scaleX(1.3523809523809525);color:#000;">rstrtmgr.<span class="u">R</span>m<span class="u">E</span>nd<span class="u">S</span>ession</div>
<div class="t" style="left:2335.5px;top:565.2px;font-family:'Liberation Mono',monospace;font-size:24.5px;transform:scaleX(1.3523809523809525);color:#808080;"><span class="z">0</span><span class="z">0</span>19<span class="u">F</span><span class="u">F</span>5<span class="z">0</span></div>
<div class="t" style="left:2527.5px;top:565.2px;font-family:'Liberation Mono',monospace;font-size:24.5px;transform:scaleX(1.3523809523809525);color:#000;"><span class="z">0</span><span class="z">0</span>561<span class="u">E</span>28</div></body></html>
